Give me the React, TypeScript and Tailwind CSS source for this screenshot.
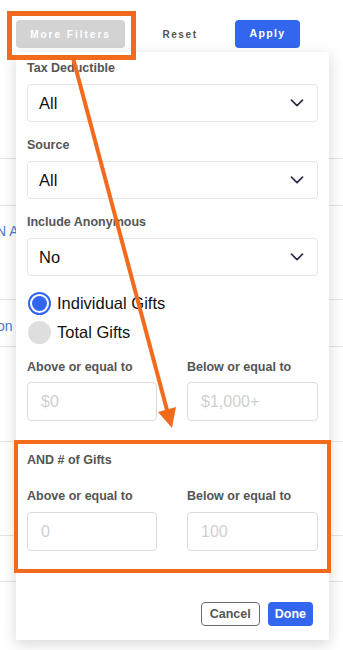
import { FC } from "react";

const Chevron: FC = () => (
  <svg width="14" height="8" viewBox="0 0 14 8" fill="none">
    <path d="M1.5 1.2 L7 6.6 L12.5 1.2" stroke="#2e2e48" strokeWidth="1.7" strokeLinecap="round" strokeLinejoin="round" />
  </svg>
);

const Label: FC<{ text: string; className?: string }> = ({ text, className = "" }) => (
  <div className={`text-[12.5px] leading-4 font-bold text-[#555] ${className}`}>{text}</div>
);

const Select: FC<{ value: string }> = ({ value }) => (
  <div className="h-[38px] rounded-[4px] border border-[#e6e6e6] flex items-center justify-between pl-[11px] pr-[13px]">
    <span className="text-[16.5px] text-[#111]">{value}</span>
    <Chevron />
  </div>
);

const Input: FC<{ placeholder: string }> = ({ placeholder }) => (
  <div className="h-[39px] rounded-[4px] border border-[#dcdcdc] flex items-center pl-[13px]">
    <span className="text-[16px] text-[#d0d0d0]">{placeholder}</span>
  </div>
);

export default function App() {
  const rows = [47, 94, 47, 95, 94, 46, 47];
  return (
    <div className="relative w-[343px] h-[650px] bg-white overflow-hidden font-['Liberation_Sans',Arial,sans-serif]">
      {/* top bar */}
      <div className="flex items-center h-[68px] pl-[16px] pt-[20px] pb-[20px]">
        <div className="w-[109px] h-[28px] rounded-[4px] bg-[#d3d3d3] flex items-center justify-center text-white text-[10px] font-bold tracking-[2px]">
          More Filters
        </div>
        <div className="w-[110px] text-center text-[#555] text-[10px] font-bold tracking-[1.6px]">Reset</div>
        <div className="w-[65px] h-[28px] rounded-[4px] bg-[#3366ee] flex items-center justify-center text-white text-[10.5px] font-bold tracking-[1.4px]">
          Apply
        </div>
      </div>

      {/* background table */}
      <div className="mt-[90px]">
        {rows.map((h, i) => (
          <div key={i} className="border-t border-[#e3e3e3] relative" style={{ height: h }}>
            {i === 1 && <span className="absolute left-[-4px] top-[15px] text-[14px] text-[#4a80c8]">N A</span>}
            {i === 2 && <span className="absolute left-[-3px] top-[16px] text-[14px] text-[#4a80c8]">on</span>}
          </div>
        ))}
      </div>

      {/* dropdown panel */}
      <div className="absolute left-[16px] top-[52px] w-[313px] h-[588px] bg-white shadow-[0_4px_14px_rgba(0,0,0,0.16)] px-[11px] pt-[8px]">
        <Label text="Tax Deductible" className="mb-[8px]" />
        <Select value="All" />
        <Label text="Source" className="mt-[15px] mb-[8px]" />
        <Select value="All" />
        <Label text="Include Anonymous" className="mt-[15px] mb-[8px]" />
        <Select value="No" />

        <div className="mt-[13px] flex flex-col">
          <div className="h-[29px] flex items-center gap-[6px] pl-[1px]">
            <div className="w-[23px] h-[23px] rounded-full border-2 border-[#3366ee] flex items-center justify-center">
              <div className="w-[15px] h-[15px] rounded-full bg-[#3366ee]" />
            </div>
            <span className="text-[16.5px] text-[#111]">Individual Gifts</span>
          </div>
          <div className="h-[29px] flex items-center gap-[6px] pl-[1px]">
            <div className="w-[23px] h-[23px] rounded-full bg-[#dedede]" />
            <span className="text-[16.5px] text-[#111]">Total Gifts</span>
          </div>
        </div>

        <div className="mt-[12px] grid grid-cols-[130px_131px] justify-between">
          <div>
            <Label text="Above or equal to" className="mb-[7px]" />
            <Input placeholder="$0" />
          </div>
          <div>
            <Label text="Below or equal to" className="mb-[7px]" />
            <Input placeholder="$1,000+" />
          </div>
        </div>

        <Label text="AND # of Gifts" className="mt-[31px]" />
        <div className="mt-[20px] grid grid-cols-[130px_131px] justify-between">
          <div>
            <Label text="Above or equal to" className="mb-[8px]" />
            <Input placeholder="0" />
          </div>
          <div>
            <Label text="Below or equal to" className="mb-[8px]" />
            <Input placeholder="100" />
          </div>
        </div>

        <div className="mt-[51px] flex justify-end gap-[8px] pr-[5px]">
          <div className="h-[24px] px-[8px] rounded-[4px] border border-[#6b6b78] flex items-center text-[12.5px] font-bold text-[#555]">
            Cancel
          </div>
          <div className="h-[24px] px-[7px] rounded-[4px] bg-[#3366ee] flex items-center text-[12.5px] font-bold text-white">
            Done
          </div>
        </div>
      </div>

      {/* annotations */}
      <div className="absolute left-[7px] top-[11px] w-[129px] h-[49px] border-[5px] border-[#f26b1d]" />
      <div className="absolute left-[14px] top-[440px] w-[317px] h-[133px] border-[4px] border-[#f26b1d]" />
      <svg className="absolute left-0 top-0" width="343" height="650" viewBox="0 0 343 650">
        <line x1="73" y1="58" x2="167" y2="410" stroke="#f26b1d" strokeWidth="4" />
        <polygon points="172,428 176,407 158,412" fill="#f26b1d" />
      </svg>
    </div>
  );
}
